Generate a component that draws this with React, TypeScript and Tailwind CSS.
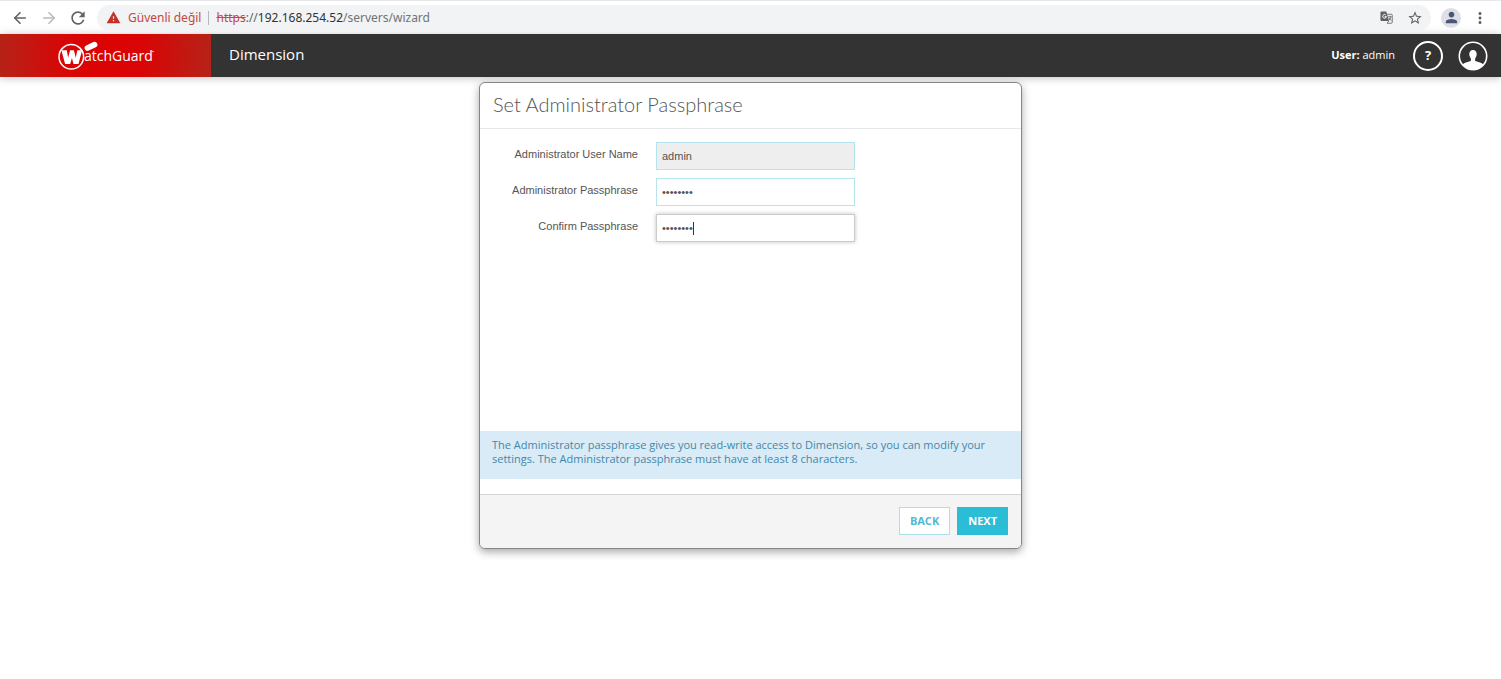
import type { ReactNode } from "react";
import { ArrowLeft, ArrowRight } from "lucide-react";
import { MdMoreVert, MdPerson, MdRefresh, MdStarBorder, MdWarning } from "react-icons/md";

function BrowserBar() {
  return (
    <div className="flex h-[34px] items-center border-t border-gray-200 bg-white px-3 font-['Noto_Sans',sans-serif] text-[#5f6368]">
      <button type="button" aria-label="Back" className="flex w-4 justify-center">
        <ArrowLeft size={18} strokeWidth={2.2} className="shrink-0" />
      </button>
      <button type="button" aria-label="Forward" className="ml-[13px] flex w-4 justify-center text-[#babcbe]">
        <ArrowRight size={18} strokeWidth={2.2} className="shrink-0" />
      </button>
      <button type="button" aria-label="Reload" className="ml-3 flex w-[18px] justify-center">
        <MdRefresh size={20} className="shrink-0" />
      </button>

      <div className="ml-[10px] flex h-[26px] flex-1 items-center rounded-full bg-[#f1f3f4] pr-2 pl-[9px] text-[12px]">
        <MdWarning size={15} className="text-[#c5302a]" />
        <span className="ml-[7px] text-[#c5473f]">Güvenli değil</span>
        <span className="mx-[7px] h-[14px] w-px bg-[#b5b7b9]" />
        <span className="flex-1">
          <span className="text-[#c5473f] line-through">https</span>://
          <span className="text-[#303236]">192.168.254.52</span>
          <span className="text-[#6f7377]">/servers/wizard</span>
        </span>
        <button type="button" aria-label="Translate this page">
          <TranslateIcon />
        </button>
        <button type="button" aria-label="Bookmark this page" className="ml-[14px]">
          <MdStarBorder size={16} />
        </button>
      </div>

      <button
        type="button"
        aria-label="Profile"
        className="ml-[10px] flex size-5 items-center justify-center rounded-full bg-[#dcdfe6] text-[#4a5876]"
      >
        <MdPerson size={17} />
      </button>
      <button type="button" aria-label="Menu" className="ml-[10px]">
        <MdMoreVert size={18} />
      </button>
    </div>
  );
}

function TranslateIcon() {
  return (
    <svg width="13" height="13" viewBox="0 0 14 14" fill="none">
      <path d="M5 3.5h7.2a1 1 0 0 1 1 1v7.7a1 1 0 0 1-1 1H7.6" stroke="#6d7074" />
      <path d="M1.5.5h5.2l3.1 10.3H1.5a1 1 0 0 1-1-1V1.5a1 1 0 0 1 1-1Z" fill="#5f6368" />
      <path d="M6.2 4.2A2 2 0 1 0 6.9 6H5" stroke="#fff" />
      <path d="M8.8 6.2h3.7M10.6 5.2v1M12 6.2c-.4 1.7-1.3 2.9-2.5 3.8M9.6 7.4l2.4 3M7.5 13l2.1-2.2" stroke="#6d7074" />
    </svg>
  );
}

function Logo() {
  return (
    <svg width="98" height="30" viewBox="0 0 98 30" aria-label="WatchGuard" role="img">
      <circle cx="14.3" cy="15.8" r="12.3" fill="none" stroke="#fff" strokeWidth="1.5" />
      <path
        d="M4.4 9.2h5.4l1.3 7.6 2-7.6h3.8l1.9 7.6 1.5-7.6h4.8l-3.6 13.8h-5l-1.6-6-1.7 6H8.1Z"
        fill="#fff"
      />
      <path d="m30.5 7.2 7-3.3" stroke="#d90505" strokeWidth="8.5" strokeLinecap="round" />
      <path d="m30.5 7 7-3.3" stroke="#fff" strokeWidth="5.8" strokeLinecap="round" />
      <text x="27" y="20" fill="#fff" fontFamily="Open Sans, sans-serif" fontSize="14">
        atchGuard
      </text>
      <circle cx="96" cy="10.5" r="0.7" fill="#fff" />
    </svg>
  );
}

function UserIcon() {
  return (
    <svg width="30" height="30" viewBox="0 0 30 30">
      <defs>
        <clipPath id="avatar">
          <circle cx="15" cy="15" r="13.5" />
        </clipPath>
      </defs>
      <path
        clipPath="url(#avatar)"
        d="M15 9c-2.6 0-3.8 1.9-3.7 4.3.1 1.9.8 3.4 1.6 4.3v2.2c-1.9 1.3-6.8 1.5-8.4 4.2V30h21v-6c-1.6-2.7-6.5-2.9-8.4-4.2v-2.2c.8-.9 1.5-2.4 1.6-4.3.1-2.4-1.1-4.3-3.7-4.3Z"
        fill="#fff"
      />
      <circle cx="15" cy="15" r="13.7" fill="none" stroke="#fff" strokeWidth="1.6" />
    </svg>
  );
}

function NavBar() {
  return (
    <header className="flex h-[43px] items-center bg-[#333] font-['Open_Sans',sans-serif] text-white shadow-[0_1px_8px_rgba(0,0,0,0.25)]">
      <a
        href="#home"
        className="flex h-full w-[211px] items-center justify-center bg-[radial-gradient(circle,#dc0202_0%,#d90505_35%,#b52318_100%)]"
      >
        <Logo />
      </a>
      <h1 className="ml-[18px] flex-1 pb-[2px] text-[15px]">Dimension</h1>
      <p className="text-[11px]">
        <span className="font-bold">User:</span> admin
      </p>
      <button
        type="button"
        aria-label="Help"
        className="ml-[18px] flex size-[30px] items-center justify-center rounded-full border-2 border-white text-[13px] font-bold"
      >
        ?
      </button>
      <button type="button" aria-label="Account" className="mr-[13px] ml-[15px]">
        <UserIcon />
      </button>
    </header>
  );
}

function Field({ id, label, children }: { id: string; label: string; children: ReactNode }) {
  return (
    <div className="flex">
      <label htmlFor={id} className="mr-[18px] w-[144px] pt-1 text-right leading-4">
        {label}
      </label>
      {children}
    </div>
  );
}

const inputClass = "h-7 w-[199px] border px-[5px] text-[11px] text-[#555] outline-none";

export default function App() {
  return (
    <div className="min-h-screen bg-white">
      <BrowserBar />
      <NavBar />

      <main className="flex justify-center pt-[5px]">
        <form className="w-full max-w-[543px] overflow-hidden rounded-md border border-[#858585] bg-white shadow-[0_3px_8px_rgba(0,0,0,0.35)]">
          <h2 className="border-b border-gray-200 px-[13px] pt-[6px] pb-[9px] font-['Lato',sans-serif] text-[20px] leading-[30px] font-light text-[#555]">
            Set Administrator Passphrase
          </h2>

          <div className="flex min-h-[302px] flex-col gap-2 px-[14px] pt-[13px] font-['Liberation_Sans',sans-serif] text-[11px] text-[#555]">
            <Field id="username" label="Administrator User Name">
              <input
                id="username"
                type="text"
                defaultValue="admin"
                readOnly
                className={`${inputClass} border-[#b5e4ec] bg-[#eee]`}
              />
            </Field>
            <Field id="passphrase" label="Administrator Passphrase">
              <input
                id="passphrase"
                type="password"
                defaultValue="password"
                className={`${inputClass} border-[#b5e4ec]`}
              />
            </Field>
            <Field id="confirm" label="Confirm Passphrase">
              <div className="relative">
                <input
                  id="confirm"
                  type="password"
                  defaultValue="password"
                  className={`${inputClass} border-[#ccc] shadow-[0_0_4px_rgba(0,0,0,0.25)]`}
                />
                <span className="absolute top-2 left-[37px] h-[13px] w-px bg-[#333]" />
              </div>
            </Field>
          </div>

          <p className="bg-[#d9ebf7] px-3 pt-[7px] pb-[13px] font-['Open_Sans',sans-serif] text-[11px] leading-[14px] text-[#4687a8]">
            The Administrator passphrase gives you read-write access to Dimension, so you can modify your settings. The
            Administrator passphrase must have at least 8 characters.
          </p>

          <div className="mt-[15px] flex justify-end gap-[7px] border-t border-[#d5d5d5] bg-[#f4f4f4] px-[13px] pt-3 pb-[13px] font-['Open_Sans',sans-serif] text-[11px] font-bold">
            <button type="button" className="h-7 border border-[#ace0e9] bg-white px-[10px] text-[#55b8d0]">
              BACK
            </button>
            <button type="submit" className="h-7 border border-[#2bbcd6] bg-[#2bbcd6] px-[10px] text-white">
              NEXT
            </button>
          </div>
        </form>
      </main>
    </div>
  );
}
